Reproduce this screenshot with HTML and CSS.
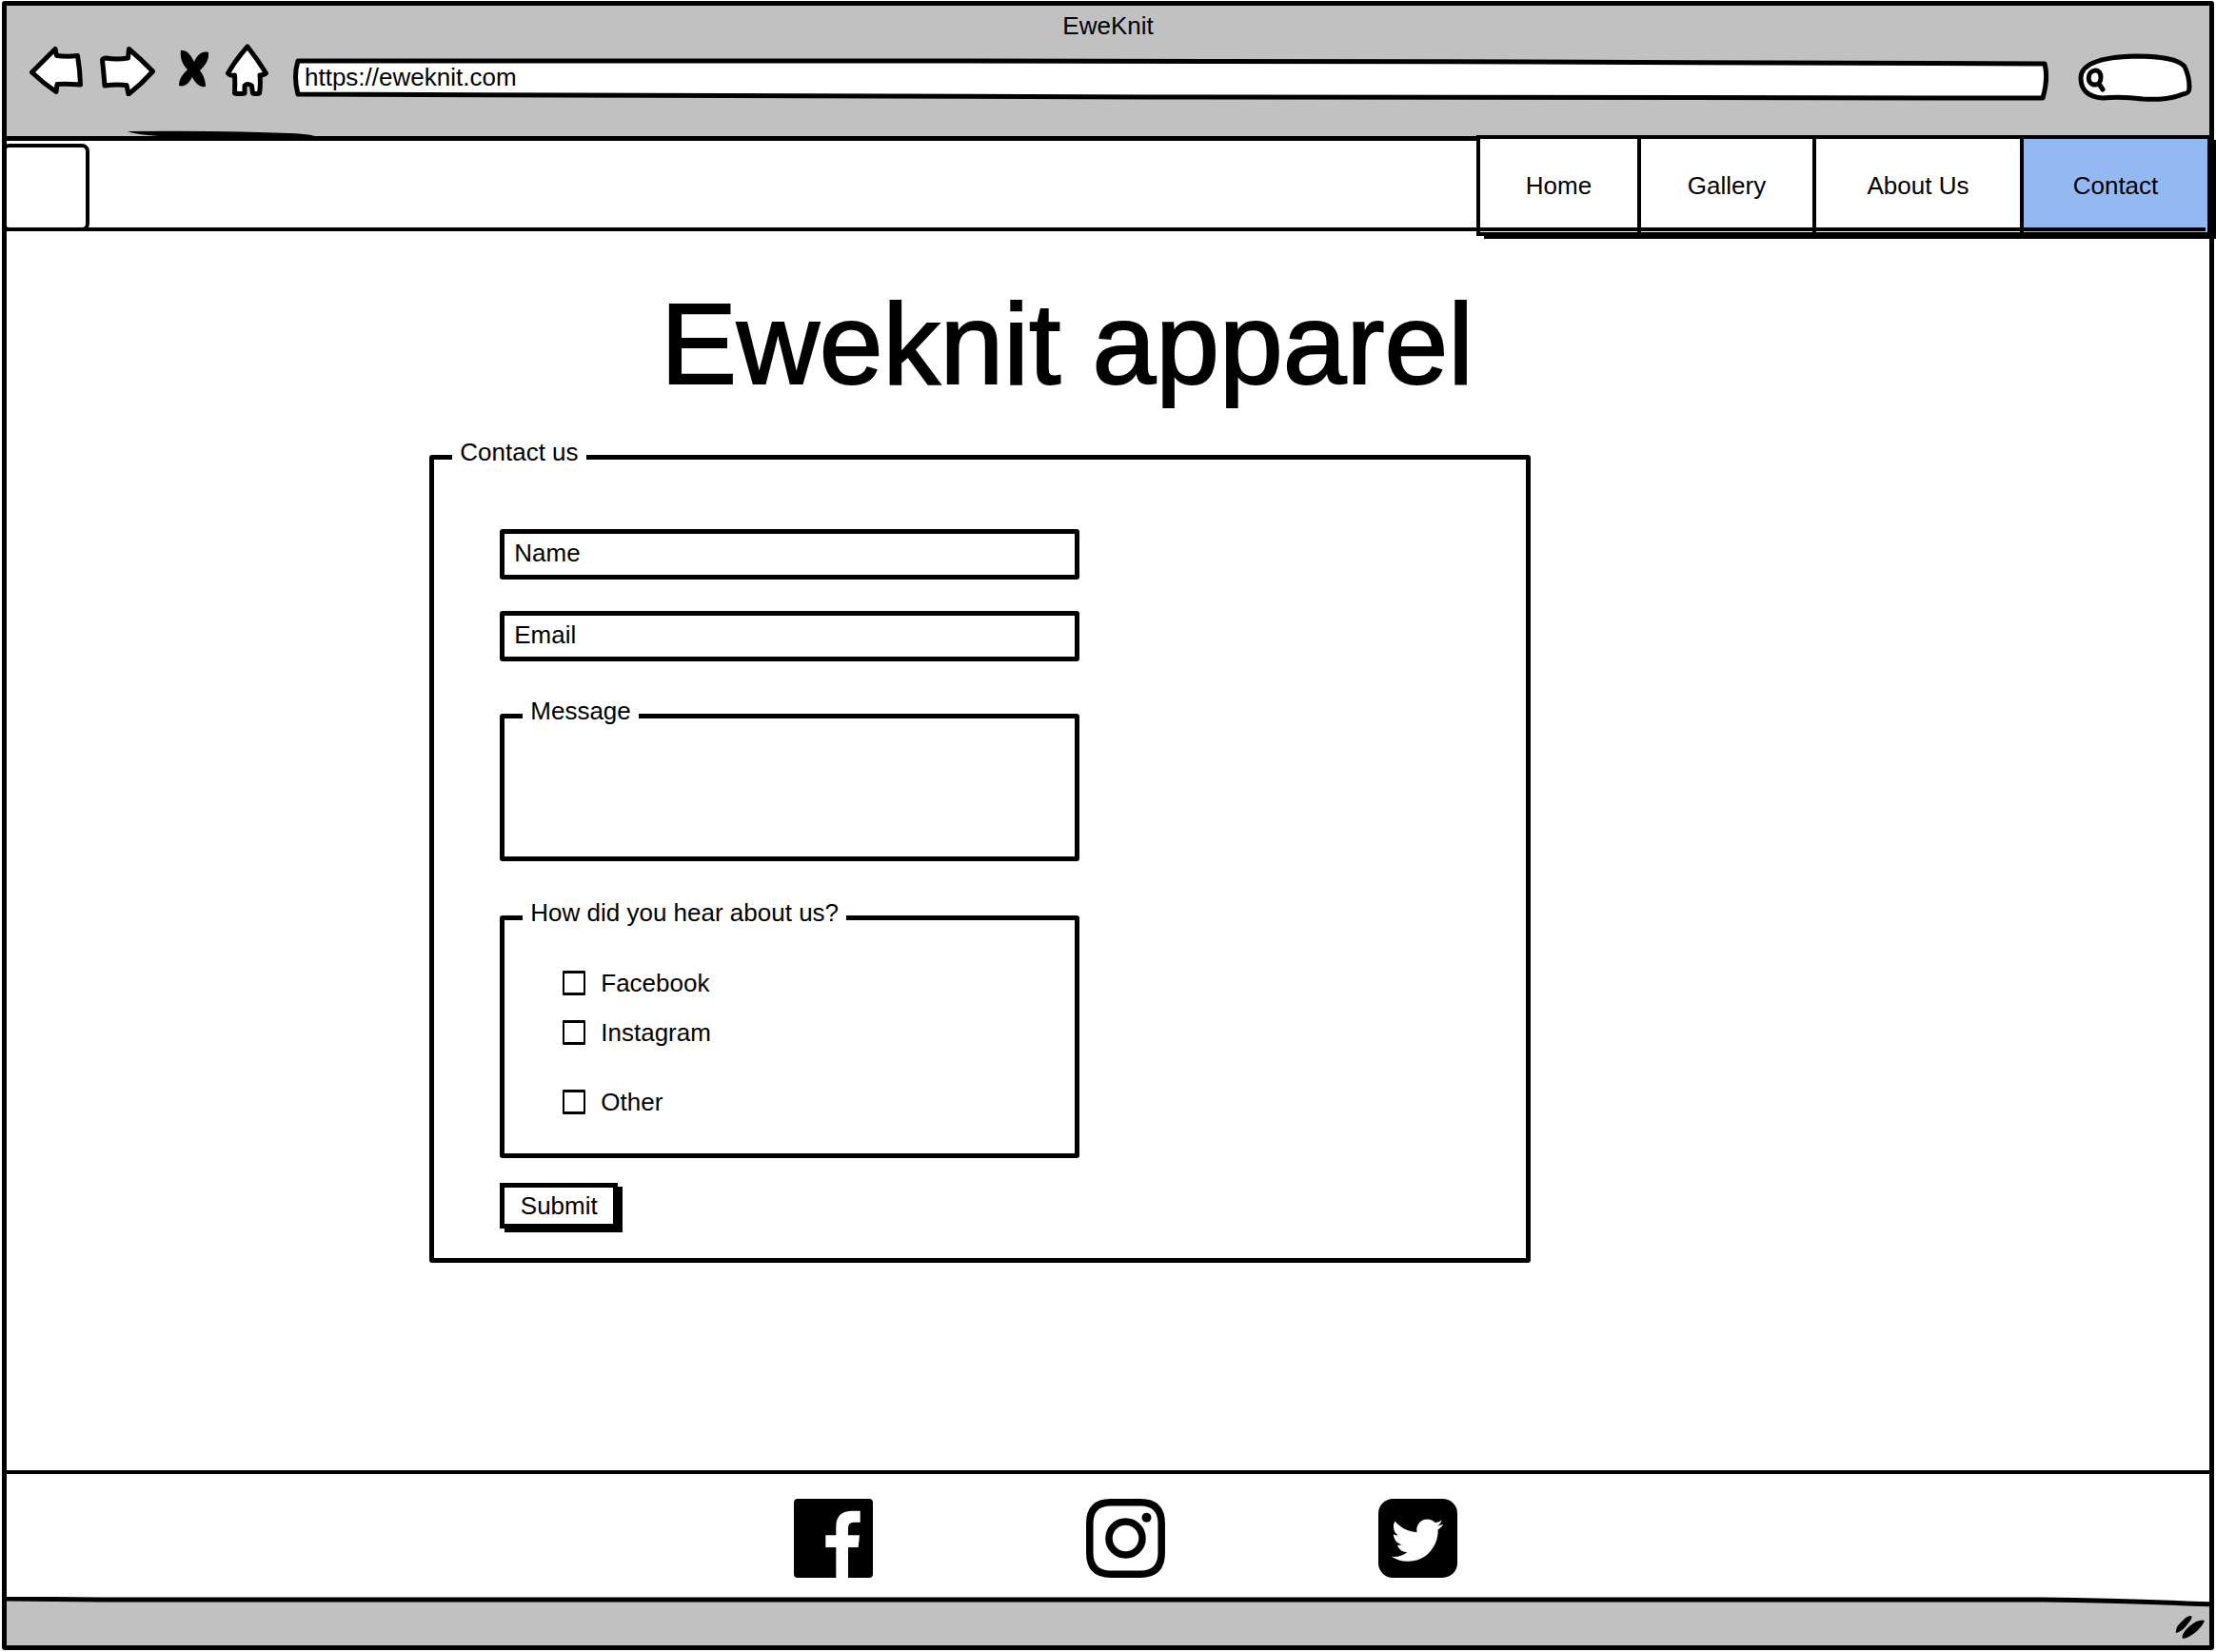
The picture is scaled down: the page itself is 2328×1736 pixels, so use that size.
FILE: index.html
```html
<!DOCTYPE html>
<html lang="en">
<head>
<meta charset="utf-8">
<meta name="viewport" content="width=device-width, initial-scale=1">
<title>EweKnit</title>
<link rel="stylesheet" href="styles.css">
</head>
<body>
<div class="window">
  <header class="chrome">
    <div class="window-title">EweKnit</div>
    <div class="toolbar">
      <div class="controls">
        <button class="control" type="button" aria-label="Back">
          <svg width="56" height="54" viewBox="0 0 56 54"><path class="ink" d="M2.500 29L27 4.500L28.500 11.500Q40 13 50.500 11.500Q53 26 53.500 42Q40 41 29 41.500L28 49.500Q14 40 2.500 29Z"/></svg>
        </button>
        <button class="control" type="button" aria-label="Forward">
          <svg width="58" height="54" viewBox="0 0 58 54"><path class="ink" d="M2.500 16Q3 14.500 6 14Q18 16 29.500 14L30.500 4.500Q44 16 55.500 28Q44 41 30 52L28 42.500Q16 41.500 5 43Q4 30 2.500 16Z"/></svg>
        </button>
        <button class="control" type="button" aria-label="Stop">
          <svg width="38" height="54" viewBox="0 0 38 54"><path d="M9 6C16 5 20 12 23 18C26 11 31 6 38 8C39 17 33 23 29 27C33 32 35 38 35 44C28 45 24 40 21 34C18 40 13 45 7 43C7 36 11 31 16 26C10 20 8 13 9 6Z"/></svg>
        </button>
        <button class="control" type="button" aria-label="Home">
          <svg width="46" height="56" viewBox="0 0 46 56"><path class="ink" d="M23 3Q34 17 42.500 31Q40 33 36 33Q37 43 35.500 52Q32 53 28.500 52L27.500 44Q23 41 20 44L20 52Q14 53 9.500 52Q10 42 9.500 33Q5 34 2.500 31Q11 16 23 3Z"/></svg>
        </button>
      </div>
      <div class="address">
        <svg class="outline" viewBox="0 0 1845 42" preserveAspectRatio="none"><path class="ink" d="M5 4L700 4L1300 5L1840 7Q1844 22 1838 43L900 42L5 39Q0 20 5 4Z"/></svg>
        <input class="address-input" type="text" value="https://eweknit.com" aria-label="Address">
      </div>
      <div class="search">
        <svg class="outline" viewBox="0 0 120 52" preserveAspectRatio="none"><path class="ink" d="M26 47C10 46 3 38 3 26C3 12 22 4 60 3C88 3 107 7 112 14C116 22 117 30 117 36C117 41 115 42 110 43C98 48 84 49 68 48Q45 45 26 47Z"/><path class="ink lens" d="M18 18C9 19 9 33 18 33C26 33 26 17 18 18ZM22 32L26 38"/></svg>
        <input class="search-input" type="search" aria-label="Search">
      </div>
    </div>
    <svg class="swoosh" width="200" height="8" viewBox="0 0 200 8"><path d="M0 1Q100 0 170 3Q198 4 200 8L60 7Q12 6 0 1Z"/></svg>
  </header>

  <div class="site-bar">
    <a class="logo" href="#" aria-label="EweKnit home page"></a>
    <nav class="tabs">
      <a class="tab" href="#">Home</a>
      <a class="tab" href="#">Gallery</a>
      <a class="tab" href="#">About Us</a>
      <a class="tab active" href="#" aria-current="page">Contact</a>
    </nav>
  </div>

  <main class="page">
    <h1 class="headline">Eweknit apparel</h1>
    <form class="contact-form">
      <fieldset class="box contact">
        <legend class="caption">Contact us</legend>
        <div class="fields">
          <input class="field" type="text" placeholder="Name" aria-label="Name">
          <input class="field" type="email" placeholder="Email" aria-label="Email">
          <fieldset class="box group">
            <legend class="caption"><label for="message">Message</label></legend>
            <textarea class="message" id="message"></textarea>
          </fieldset>
          <fieldset class="box group">
            <legend class="caption">How did you hear about us?</legend>
            <div class="options">
              <label class="option"><input class="tick" type="checkbox">Facebook</label>
              <label class="option"><input class="tick" type="checkbox">Instagram</label>
              <label class="option other"><input class="tick" type="checkbox">Other</label>
            </div>
          </fieldset>
          <button class="submit" type="submit">Submit</button>
        </div>
      </fieldset>
    </form>
  </main>

  <footer class="social">
    <a class="social-link" href="#" aria-label="Facebook">
      <svg width="83" height="83" viewBox="0 0 83 83"><path fill-rule="evenodd" d="M4 0H79Q83 0 83 4V79Q83 83 79 83H57V51H67.700L69 38.300H57V31Q57 24.700 63 24.700H69.700V12.700H60Q44.300 13.500 44.300 29V38.300H33.300V51H44.300V83H4Q0 83 0 79V4Q0 0 4 0Z"/></svg>
    </a>
    <a class="social-link" href="#" aria-label="Instagram">
      <svg width="83" height="83" viewBox="0 0 83 83" fill="none" stroke="#000" stroke-width="7.500"><path d="M26 3.800H57Q79.200 3.800 79.200 26V57Q79.200 79.200 57 79.200H26Q3.800 79.200 3.800 57V26Q3.800 3.800 26 3.800Z"/><circle cx="41.500" cy="41.500" r="17.500"/><circle cx="63.500" cy="19.700" r="5" fill="#000" stroke="none"/></svg>
    </a>
    <a class="social-link" href="#" aria-label="Twitter">
      <svg width="83" height="83" viewBox="0 0 448 448"><rect width="448" height="448" rx="84"/><path fill="#fff" transform="translate(15 0.500) scale(0.920)" d="M351.100 190.800c.2 2.800.2 5.700.2 8.500 0 86.700-66 186.600-186.600 186.600-37.200 0-71.700-10.800-100.700-29.400 5.300.6 10.400.8 15.800.8 30.700 0 58.900-10.400 81.400-28-28.800-.6-53-19.500-61.300-45.500 10.100 1.500 19.200 1.500 29.600-1.200-30-6.100-52.500-32.500-52.500-64.400v-.8c8.700 4.900 18.900 7.900 29.600 8.300a65.447 65.447 0 0 1-29.200-54.600c0-12.200 3.200-23.400 8.900-33.100 32.300 39.800 80.800 65.800 135.200 68.600-9.300-44.500 24-80.600 64-80.600 18.900 0 35.900 7.900 47.900 20.700 14.800-2.800 29-8.300 41.600-15.800-4.900 15.200-15.200 28-28.800 36.100 13.200-1.400 26-5.100 37.800-10.200-8.900 13.100-20.100 24.700-32.900 34z"/></svg>
    </a>
  </footer>

  <div class="status">
    <svg class="outline" viewBox="0 0 2314 51" preserveAspectRatio="none"><path class="edge" d="M-4 2L100 3H1500L2140 3Q2220 4 2318 8V60H-4Z"/></svg>
    <svg class="grip" width="34" height="28" viewBox="0 0 34 28"><path d="M3 19Q2 13 9 7Q15 0 19 1Q21 3 15 10Q9 18 3 19ZM10 25Q8 20 17 12Q27 4 33 6Q32 10 25 17Q17 24 10 25Z"/></svg>
  </div>
</div>
</body>
</html>
```

FILE: styles.css
```css
* {
  box-sizing: border-box;
}

body {
  margin: 0;
  padding: 1px 2px 2px;
  min-height: 100vh;
  display: flex;
  background: #fff;
  color: #000;
  font: 26px/30px "Liberation Sans", Arial, sans-serif;
}

input,
textarea,
button {
  font: inherit;
  color: inherit;
}

a {
  color: inherit;
  text-decoration: none;
}

svg {
  display: block;
}

/* Window frame */

.window {
  flex: 1;
  min-width: 0;
  display: flex;
  flex-direction: column;
  border: 5px solid #000;
  border-radius: 3px;
}

.chrome {
  position: relative;
  background: #c1c1c1;
  border-bottom: 5px solid #000;
}

.window-title {
  padding: 6px 0 4px;
  text-align: center;
}

.toolbar {
  display: flex;
  align-items: center;
  padding: 0 18px 27px 24px;
}

.controls {
  display: flex;
  gap: 18px;
  height: 70px;
  padding-bottom: 14px;
}

.control {
  padding: 0;
  border: 0;
  background: none;
}

.ink {
  fill: #fff;
  stroke: #000;
  stroke-width: 5px;
  stroke-linejoin: round;
  stroke-linecap: round;
  vector-effect: non-scaling-stroke;
}

.outline {
  position: absolute;
  inset: 0;
  width: 100%;
  height: 100%;
  overflow: visible;
}

.address {
  position: relative;
  flex: 1;
  height: 42px;
  margin-left: 25px;
}

.address-input,
.search-input {
  position: relative;
  display: block;
  width: 100%;
  height: 100%;
  border: 0;
  background: none;
  outline: 0;
}

.address-input {
  padding: 0 12px;
}

.search {
  position: relative;
  width: 120px;
  height: 52px;
  margin: 2px 0 0 30px;
}

.search-input {
  padding: 0 12px 0 32px;
}

.swoosh {
  position: absolute;
  left: 127px;
  bottom: -2px;
}

/* Site bar */

.site-bar {
  position: relative;
  display: flex;
  justify-content: space-between;
  height: 95px;
}

.site-bar::after {
  content: "";
  position: absolute;
  inset: auto 4px 0 0;
  border-bottom: 4px solid #000;
}

.logo {
  width: 92px;
  height: 92px;
  margin: 3px 0 0 -5px;
  border: 4px solid #000;
  border-radius: 8px;
}

.tabs {
  display: grid;
  grid-template-columns: 169px 184px 218px 197px;
  height: 106px;
  margin: -6px -2px 0 0;
  border: solid #000;
  border-width: 4px 4px 4px 0;
  background: #fff;
  box-shadow: 7px 4px 0 -1px #000;
}

.tab {
  display: flex;
  align-items: center;
  justify-content: center;
  border-left: 4px solid #000;
}

.active {
  background: #94b9f2;
}

/* Contact page */

.page {
  flex: 1;
}

.headline {
  margin: 48px 86px 29px 0;
  font-size: 120px;
  line-height: 140px;
  font-weight: 400;
  text-align: center;
  -webkit-text-stroke: 2px #000;
}

.contact-form {
  width: 50%;
  margin: 0 0 60px 19.2%;
}

.box {
  min-width: 0;
  margin: 0;
  padding: 0;
  border: 5px solid #000;
  border-radius: 3px;
}

.caption {
  margin-left: 19px;
  padding: 0 8px 10px;
}

.fields {
  display: flex;
  flex-direction: column;
  max-width: 678px;
  padding: 56px 0 31px 69px;
}

.field {
  height: 53px;
  margin-bottom: 33px;
  padding: 0 10px 2px;
  border: 5px solid #000;
  border-radius: 3px;
  background: #fff;
}

.field::placeholder {
  color: #000;
  opacity: 1;
}

.group {
  margin-top: 4px;
}

.group + .group {
  margin-top: 39px;
}

.message {
  display: block;
  width: 100%;
  height: 128px;
  padding: 0 16px;
  border: 0;
  background: none;
  resize: none;
}

.options {
  display: flex;
  flex-direction: column;
  align-items: flex-start;
  gap: 22px;
  padding: 34px 0 39px 61px;
}

.option {
  display: flex;
  align-items: center;
  gap: 16px;
}

.other {
  margin-top: 21px;
}

.tick {
  appearance: none;
  width: 24px;
  height: 26px;
  margin: 0;
  border: 3px solid #000;
  border-width: 3px 2px;
  border-radius: 1px;
  background: #fff;
}

.submit {
  align-self: flex-start;
  width: 124px;
  height: 48px;
  margin-top: 26px;
  padding: 0;
  border: 5px solid #000;
  background: #fff;
  box-shadow: 5px 4px 0 #000;
}

/* Footer */

.social {
  display: flex;
  justify-content: center;
  gap: 224px;
  padding: 26px 0 20px 36px;
  border-top: 4px solid #000;
}

.status {
  position: relative;
  display: flex;
  justify-content: flex-end;
  height: 51px;
  padding: 19px 4px 0 0;
  overflow: hidden;
}

.edge {
  fill: #c1c1c1;
  stroke: #000;
  stroke-width: 5px;
  vector-effect: non-scaling-stroke;
}

.grip {
  position: relative;
}
```
